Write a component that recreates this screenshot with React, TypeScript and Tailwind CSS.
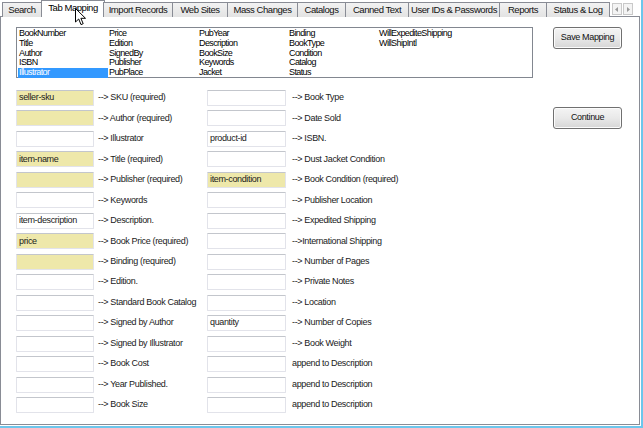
import React from 'react';

const tabs = [
  { label: 'Search', w: 40 },
  { label: 'Tab Mapping', w: 64, active: true },
  { label: 'Import Records', w: 70 },
  { label: 'Web Sites', w: 56 },
  { label: 'Mass Changes', w: 71 },
  { label: 'Catalogs', w: 49 },
  { label: 'Canned Text', w: 64 },
  { label: 'User IDs & Passwords', w: 92 },
  { label: 'Reports', w: 48 },
  { label: 'Status & Log', w: 64 },
];

const fieldColumns = [
  ['BookNumber', 'Title', 'Author', 'ISBN', 'Illustrator'],
  ['Price', 'Edition', 'SignedBy', 'Publisher', 'PubPlace'],
  ['PubYear', 'Description', 'BookSize', 'Keywords', 'Jacket'],
  ['Binding', 'BookType', 'Condition', 'Catalog', 'Status'],
  ['WillExpediteShipping', 'WillShipIntl'],
];

type Cell = { value?: string; req?: boolean; label: string };

const rows: [Cell, Cell][] = [
  [{ value: 'seller-sku', req: true, label: '--> SKU (required)' }, { label: '--> Book Type' }],
  [{ req: true, label: '--> Author (required)' }, { label: '--> Date Sold' }],
  [{ label: '--> Illustrator' }, { value: 'product-id', label: '--> ISBN.' }],
  [{ value: 'item-name', req: true, label: '--> Title (required)' }, { label: '--> Dust Jacket Condition' }],
  [{ req: true, label: '--> Publisher (required)' }, { value: 'item-condition', req: true, label: '--> Book Condition (required)' }],
  [{ label: '--> Keywords' }, { label: '--> Publisher Location' }],
  [{ value: 'item-description', label: '--> Description.' }, { label: '--> Expedited Shipping' }],
  [{ value: 'price', req: true, label: '--> Book Price (required)' }, { label: '-->International Shipping' }],
  [{ req: true, label: '--> Binding (required)' }, { label: '--> Number of Pages' }],
  [{ label: '--> Edition.' }, { label: '--> Private Notes' }],
  [{ label: '--> Standard Book Catalog' }, { label: '--> Location' }],
  [{ label: '--> Signed by Author' }, { value: 'quantity', label: '--> Number of Copies' }],
  [{ label: '--> Signed by Illustrator' }, { label: '--> Book Weight' }],
  [{ label: '--> Book Cost' }, { label: 'append to Description' }],
  [{ label: '--> Year Published.' }, { label: 'append to Description' }],
  [{ label: '--> Book Size' }, { label: 'append to Description' }],
];

function TextBox({ cell, w }: { cell: Cell; w: string }) {
  return (
    <div
      className={`${w} h-[16px] shrink-0 rounded-[1px] border border-[#e2e3ea] border-t-[#c3c6cc] flex items-center pl-[2px] ${
        cell.req ? 'bg-[#eee8aa]' : 'bg-white'
      }`}
    >
      {cell.value}
    </div>
  );
}

function WinButton({ children }: { children: React.ReactNode }) {
  return (
    <button className="w-[69px] h-[22px] rounded-[3px] border border-[#707070] bg-gradient-to-b from-[#f4f4f4] via-[#e9e9e9] to-[#d6d6d6] shadow-[inset_0_0_0_1px_#fcfcfc] text-[#111] flex items-center justify-center">
      {children}
    </button>
  );
}

export default function App() {
  return (
    <div className="w-[643px] h-[428px] bg-white overflow-hidden relative border-r-2 border-b-2 border-[#6cc6ec] font-['Liberation_Sans',Arial,sans-serif] text-[9px] tracking-[-0.35px] text-[#1a1a1a]">
      {/* tab strip */}
      <div className="flex items-end h-[17px] pl-[2px] relative z-10">
        {tabs.map((t) =>
          t.active ? (
            <div
              key={t.label}
              style={{ width: t.w }}
              className="h-[17px] -mx-[1px] bg-white border border-b-0 border-[#898c95] flex items-start justify-center text-[9.5px] tracking-[-0.45px] text-black"
            >
              {t.label}
            </div>
          ) : (
            <div
              key={t.label}
              style={{ width: t.w }}
              className="h-[15px] bg-gradient-to-b from-[#f2f2f2] to-[#e3e3e3] border border-[#898c95] border-b-0 flex items-center justify-center text-[9.5px] tracking-[-0.45px] text-[#111] -ml-[1px] first:ml-0"
            >
              {t.label}
            </div>
          ),
        )}
        <div className="flex gap-[1px] ml-[2px] mb-[2px]">
          <div className="w-[10px] h-[12px] border border-[#c9c9c9] bg-[#f4f4f4] flex items-center justify-center">
            <svg width="4" height="5" viewBox="0 0 4 5"><path d="M3 0L0 2.5L3 5z" fill="#9a9a9a" /></svg>
          </div>
          <div className="w-[10px] h-[12px] border border-[#c9c9c9] bg-[#f4f4f4] flex items-center justify-center">
            <svg width="4" height="5" viewBox="0 0 4 5"><path d="M1 0L4 2.5L1 5z" fill="#9a9a9a" /></svg>
          </div>
        </div>
      </div>

      {/* tab page */}
      <div className="-mt-[1px] w-[640px] h-[409px] border border-[#898c95] bg-white flex pl-[15px] pt-[10px]">
        <div className="flex flex-col w-[517px]">
          {/* field list */}
          <div className="w-[517px] h-[51px] border border-[#828790] bg-white flex pl-[1px] pt-[1px] tracking-[-0.6px] text-black">
            {fieldColumns.map((col, ci) => (
              <div key={ci} className="w-[90px] flex flex-col">
                {col.map((f) => (
                  <div
                    key={f}
                    className={`h-[9.75px] leading-[9.75px] pl-[1px] ${
                      f === 'Illustrator' ? 'bg-[#3399ff] text-white' : ''
                    }`}
                  >
                    {f}
                  </div>
                ))}
              </div>
            ))}
          </div>

          {/* mapping rows */}
          <div className="mt-[12px] flex flex-col">
            {rows.map(([a, b], i) => (
              <div key={i} className="h-[20.47px] flex items-start">
                <TextBox cell={a} w="w-[78px]" />
                <div className="w-[113px] h-[16px] pl-[4px] flex items-center whitespace-nowrap">{a.label}</div>
                <TextBox cell={b} w="w-[79px]" />
                <div className="h-[16px] pl-[6px] flex items-center whitespace-nowrap">{b.label}</div>
              </div>
            ))}
          </div>
        </div>

        {/* buttons */}
        <div className="ml-[20px] flex flex-col">
          <WinButton>Save Mapping</WinButton>
          <div className="h-[58px]" />
          <WinButton>Continue</WinButton>
        </div>
      </div>

      {/* mouse pointer */}
      <svg className="absolute left-[75px] top-[8px] z-20" width="12" height="18" viewBox="0 0 12 18">
        <path d="M0.5 0.5L0.5 14L3.7 11L6 16.6L8.2 15.7L5.9 10.3L10.5 10.3Z" fill="white" stroke="black" strokeWidth="1" strokeLinejoin="round" />
      </svg>
    </div>
  );
}
